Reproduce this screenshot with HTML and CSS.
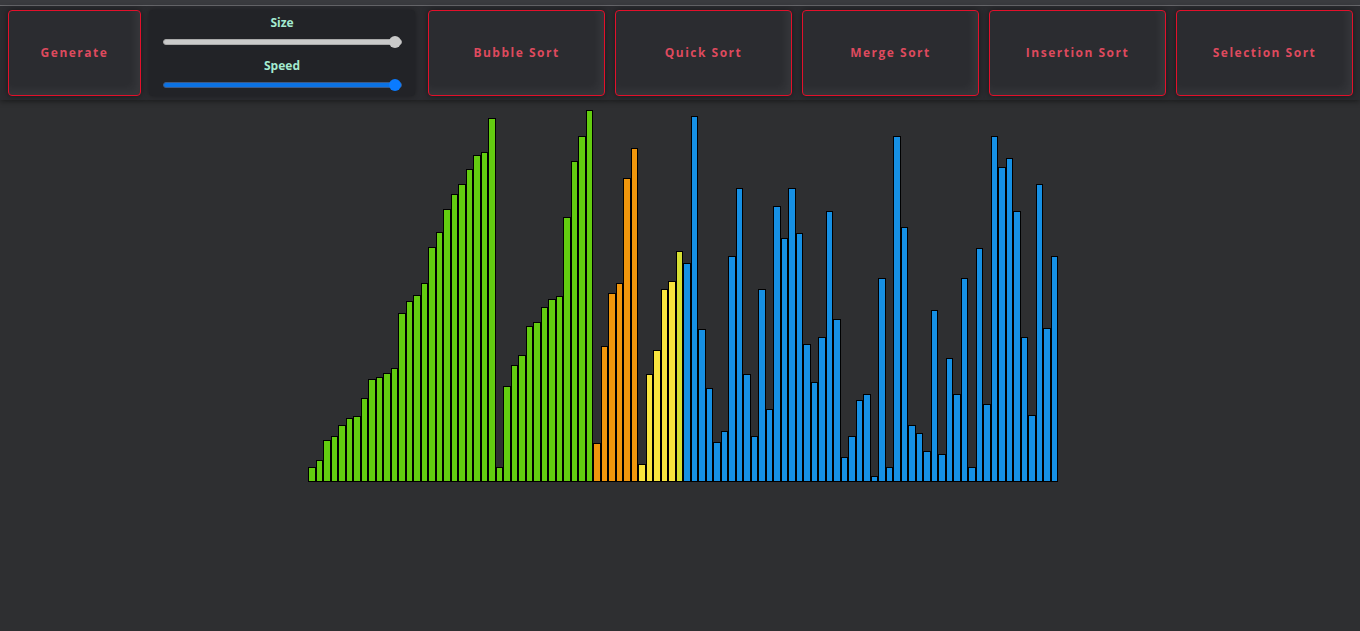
FILE: index.html
```html
<!DOCTYPE html>
<html>
<head>
<meta charset="utf-8">
<link rel="stylesheet" href="styles.css">
</head>
<body>
<div class="topstrip"></div>
<header class="toolbar">
  <button class="btn btn-generate">Generate</button>
  <div class="controls">
    <label class="ctl-label lbl-size">Size</label>
    <input class="range range-size" type="range" min="5" max="100" value="100">
    <label class="ctl-label lbl-speed">Speed</label>
    <input class="range range-speed" type="range" min="1" max="100" value="100">
  </div>
  <button class="btn btn-sort btn-first">Bubble Sort</button>
  <button class="btn btn-sort">Quick Sort</button>
  <button class="btn btn-sort">Merge Sort</button>
  <button class="btn btn-sort">Insertion Sort</button>
  <button class="btn btn-sort">Selection Sort</button>
</header>
<main class="chart">
  <div class="bars">
    <div class="bar g" style="height:14.4px"></div>
    <div class="bar g" style="height:21.4px"></div>
    <div class="bar g" style="height:41.4px"></div>
    <div class="bar g" style="height:45.4px"></div>
    <div class="bar g" style="height:56.4px"></div>
    <div class="bar g" style="height:63.4px"></div>
    <div class="bar g" style="height:65.4px"></div>
    <div class="bar g" style="height:83.4px"></div>
    <div class="bar g" style="height:102.4px"></div>
    <div class="bar g" style="height:104.4px"></div>
    <div class="bar g" style="height:108.4px"></div>
    <div class="bar g" style="height:113.4px"></div>
    <div class="bar g" style="height:168.4px"></div>
    <div class="bar g" style="height:180.4px"></div>
    <div class="bar g" style="height:186.4px"></div>
    <div class="bar g" style="height:198.4px"></div>
    <div class="bar g" style="height:234.4px"></div>
    <div class="bar g" style="height:249.4px"></div>
    <div class="bar g" style="height:272.4px"></div>
    <div class="bar g" style="height:287.4px"></div>
    <div class="bar g" style="height:297.4px"></div>
    <div class="bar g" style="height:312.4px"></div>
    <div class="bar g" style="height:326.4px"></div>
    <div class="bar g" style="height:329.4px"></div>
    <div class="bar g" style="height:363.4px"></div>
    <div class="bar g" style="height:14.4px"></div>
    <div class="bar g" style="height:95.4px"></div>
    <div class="bar g" style="height:116.4px"></div>
    <div class="bar g" style="height:126.4px"></div>
    <div class="bar g" style="height:155.4px"></div>
    <div class="bar g" style="height:159.4px"></div>
    <div class="bar g" style="height:174.4px"></div>
    <div class="bar g" style="height:182.4px"></div>
    <div class="bar g" style="height:185.4px"></div>
    <div class="bar g" style="height:264.4px"></div>
    <div class="bar g" style="height:320.4px"></div>
    <div class="bar g" style="height:345.4px"></div>
    <div class="bar g" style="height:371.4px"></div>
    <div class="bar o" style="height:38.4px"></div>
    <div class="bar o" style="height:135.4px"></div>
    <div class="bar o" style="height:188.4px"></div>
    <div class="bar o" style="height:198.4px"></div>
    <div class="bar o" style="height:303.4px"></div>
    <div class="bar o" style="height:333.4px"></div>
    <div class="bar y" style="height:17.4px"></div>
    <div class="bar y" style="height:107.4px"></div>
    <div class="bar y" style="height:131.4px"></div>
    <div class="bar y" style="height:192.4px"></div>
    <div class="bar y" style="height:200.4px"></div>
    <div class="bar yg" style="height:230.4px"></div>
    <div class="bar b" style="height:218.4px"></div>
    <div class="bar b" style="height:365.4px"></div>
    <div class="bar b" style="height:152.4px"></div>
    <div class="bar b" style="height:93.4px"></div>
    <div class="bar b" style="height:39.4px"></div>
    <div class="bar b" style="height:50.4px"></div>
    <div class="bar b" style="height:225.4px"></div>
    <div class="bar b" style="height:293.4px"></div>
    <div class="bar b" style="height:107.4px"></div>
    <div class="bar b" style="height:45.4px"></div>
    <div class="bar b" style="height:192.4px"></div>
    <div class="bar b" style="height:72.4px"></div>
    <div class="bar b" style="height:275.4px"></div>
    <div class="bar b" style="height:243.4px"></div>
    <div class="bar b" style="height:293.4px"></div>
    <div class="bar b" style="height:248.4px"></div>
    <div class="bar b" style="height:137.4px"></div>
    <div class="bar b" style="height:99.4px"></div>
    <div class="bar b" style="height:144.4px"></div>
    <div class="bar b" style="height:270.4px"></div>
    <div class="bar b" style="height:162.4px"></div>
    <div class="bar b" style="height:24.4px"></div>
    <div class="bar b" style="height:45.4px"></div>
    <div class="bar b" style="height:81.4px"></div>
    <div class="bar b" style="height:87.4px"></div>
    <div class="bar b" style="height:5.4px"></div>
    <div class="bar b" style="height:203.4px"></div>
    <div class="bar b" style="height:14.4px"></div>
    <div class="bar b" style="height:345.4px"></div>
    <div class="bar b" style="height:254.4px"></div>
    <div class="bar b" style="height:56.4px"></div>
    <div class="bar b" style="height:48.4px"></div>
    <div class="bar b" style="height:30.4px"></div>
    <div class="bar b" style="height:171.4px"></div>
    <div class="bar b" style="height:27.4px"></div>
    <div class="bar b" style="height:123.4px"></div>
    <div class="bar b" style="height:87.4px"></div>
    <div class="bar b" style="height:203.4px"></div>
    <div class="bar b" style="height:14.4px"></div>
    <div class="bar b" style="height:233.4px"></div>
    <div class="bar b" style="height:77.4px"></div>
    <div class="bar b" style="height:345.4px"></div>
    <div class="bar b" style="height:314.4px"></div>
    <div class="bar b" style="height:323.4px"></div>
    <div class="bar b" style="height:270.4px"></div>
    <div class="bar b" style="height:144.4px"></div>
    <div class="bar b" style="height:66.4px"></div>
    <div class="bar b" style="height:297.4px"></div>
    <div class="bar b" style="height:153.4px"></div>
    <div class="bar b" style="height:225.4px"></div>
  </div>
</main>
</body>
</html>
```
FILE: styles.css
```css
* { box-sizing: border-box; }
html, body {
  margin: 0;
  padding: 0;
  background: #2e2f31;
  font-family: "Open Sans", "Noto Sans", sans-serif;
  overflow: hidden;
}
.topstrip {
  height: 6px;
  background: #3a3b3f;
  border-bottom: 1px solid #6c6c70;
}
.toolbar {
  display: flex;
  align-items: stretch;
  height: 94px;
  padding: 4px 7px 4px 8px;
  background: #2a2b2f;
  box-shadow: 0 2px 5px rgba(0, 0, 0, 0.35);
  position: relative;
  z-index: 1;
}
.btn {
  height: 86px;
  border: 1px solid #e3102b;
  border-radius: 4px;
  background: #2b2c30;
  color: #de4a5e;
  font-family: "Open Sans", "Noto Sans", sans-serif;
  font-weight: 700;
  font-size: 12px;
  letter-spacing: 1.5px;
  padding: 0 0 2px 0;
  box-shadow: inset -5px -5px 9px rgba(255, 255, 255, 0.05), 0 0 6px rgba(0, 0, 0, 0.45);
  cursor: pointer;
}
.btn-generate {
  width: 133px;
  margin-right: 8px;
}
.btn-sort {
  width: 177px;
  margin-left: 10px;
}
.btn-first {
  margin-left: 13px;
}
.controls {
  width: 266px;
  height: 86px;
  background: #222327;
  border-radius: 4px;
  box-shadow: 0 0 5px rgba(0, 0, 0, 0.35);
  display: flex;
  flex-direction: column;
  align-items: center;
  padding-top: 5px;
}
.ctl-label {
  height: 16px;
  line-height: 16px;
  font-size: 12px;
  font-weight: 700;
  color: #a4ead0;
}
.range {
  -webkit-appearance: none;
  appearance: none;
  width: 239px;
  height: 14px;
  margin: 0;
  background: transparent;
}
.range-size { margin-top: 4px; margin-bottom: 9px; margin-left: 1px; }
.range-speed { margin-top: 4px; margin-left: 1px; }
.range::-webkit-slider-runnable-track {
  height: 6px;
  border-radius: 3px;
}
.range-size::-webkit-slider-runnable-track {
  background: #cacaca;
  border: 1px solid #a9a9a9;
}
.range-speed::-webkit-slider-runnable-track {
  background: #0b72e4;
  border: 1px solid #3d5a86;
}
.range::-webkit-slider-thumb {
  -webkit-appearance: none;
  width: 12px;
  height: 12px;
  border-radius: 50%;
  margin-top: -4px;
  border: none;
}
.range-size::-webkit-slider-thumb { background: #c9c9c9; }
.range-speed::-webkit-slider-thumb { background: #0a7bff; }
.chart {
  padding-top: 0;
}
.bars {
  width: 750px;
  height: 381.7px;
  margin-left: calc(50% - 371.7px);
  display: flex;
  align-items: flex-end;
}
.bar {
  width: 7.5px;
  flex: 0 0 7.5px;
  border: 1px solid #000;
}
.g { background: #63cc10; }
.o { background: #f0960c; }
.y { background: #f8e43e; }
.yg { background: #d6df33; }
.b { background: #1690e4; }
```
